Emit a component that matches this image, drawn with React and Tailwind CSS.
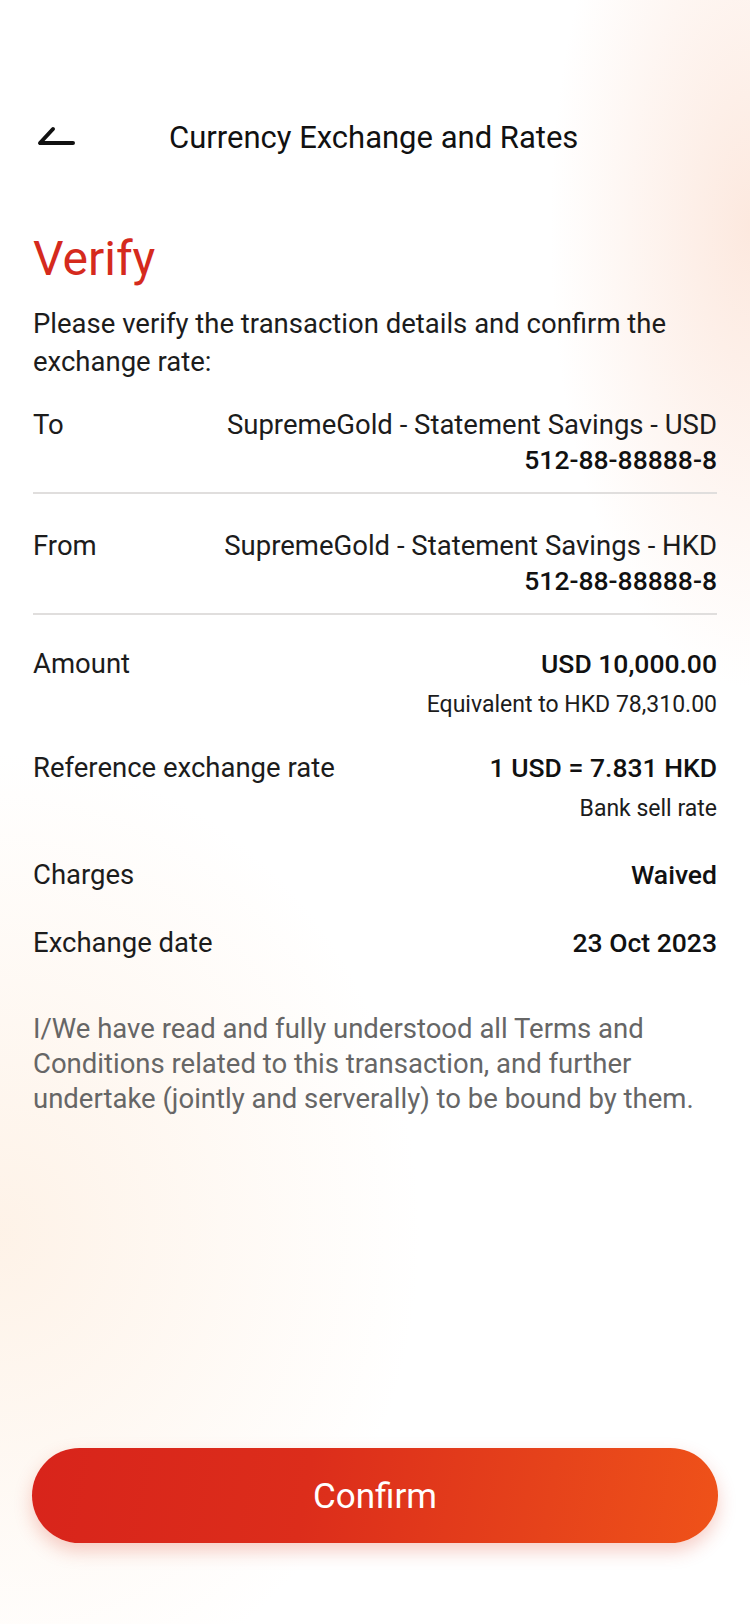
const font = { fontFamily: 'Roboto, "Noto Sans", sans-serif' }

function DetailRow({ label, value, sub }) {
  return (
    <div className="flex justify-between items-start">
      <div className="text-[27.5px] leading-[35px] text-[#1c1c1c]">{label}</div>
      <div className="flex flex-col items-end text-right">
        <div className="text-[27.5px] leading-[35px] text-[#1c1c1c]">{value}</div>
        <div className="text-[26.5px] leading-[35px] font-medium text-[#111]">{sub}</div>
      </div>
    </div>
  )
}

function ValueRow({ label, value, note }) {
  return (
    <div className="flex flex-col">
      <div className="flex justify-between items-start">
        <div className="text-[27.5px] leading-[35px] text-[#1c1c1c]">{label}</div>
        <div className="text-[26.5px] leading-[35px] font-medium text-[#111]">{value}</div>
      </div>
      {note && (
        <div className="mt-[9px] text-right text-[23px] leading-[30px] text-[#1c1c1c]">{note}</div>
      )}
    </div>
  )
}

export default function App() {
  return (
    <div
      style={font}
      className="relative w-[750px] h-[1624px] overflow-hidden flex flex-col bg-white bg-[radial-gradient(ellipse_200px_460px_at_100%_14%,rgba(250,214,196,0.55),transparent),radial-gradient(ellipse_420px_480px_at_0%_76%,rgba(253,234,216,0.6),transparent)]"
    >
      {/* header */}
      <div className="mt-[88px] h-[100px] flex items-center">
        <button className="w-[110px] h-full flex items-center pl-[36px]" aria-label="Back">
          <svg width="40" height="24" viewBox="0 0 40 24" fill="none">
            <path d="M17 3 L4 17 L37 17" stroke="#111" strokeWidth="4" strokeLinecap="round" strokeLinejoin="round" />
          </svg>
        </button>
        <div className="ml-[59px] text-[31px] leading-[36px] text-[#111]">Currency Exchange and Rates</div>
      </div>

      <div className="px-[33px] flex flex-col">
        <h1 className="mt-[42px] text-[48px] leading-[58px] text-[#d52a1d]">Verify</h1>
        <p className="mt-[17px] text-[27.5px] leading-[38px] text-[#1c1c1c]">
          Please verify the transaction details and confirm the exchange rate:
        </p>

        <div className="mt-[26px] pb-[15px] border-b-2 border-[#e0dedd]">
          <DetailRow label="To" value="SupremeGold - Statement Savings - USD" sub="512-88-88888-8" />
        </div>
        <div className="mt-[34px] pb-[15px] border-b-2 border-[#e0dedd]">
          <DetailRow label="From" value="SupremeGold - Statement Savings - HKD" sub="512-88-88888-8" />
        </div>

        <div className="mt-[31px]">
          <ValueRow label="Amount" value="USD 10,000.00" note="Equivalent to HKD 78,310.00" />
        </div>
        <div className="mt-[30px]">
          <ValueRow label="Reference exchange rate" value="1 USD = 7.831 HKD" note="Bank sell rate" />
        </div>
        <div className="mt-[33px]">
          <ValueRow label="Charges" value="Waived" />
        </div>
        <div className="mt-[33px]">
          <ValueRow label="Exchange date" value="23 Oct 2023" />
        </div>

        <p className="mt-[51px] text-[27.5px] leading-[35px] text-[#666]">
          I/We have read and fully understood all Terms and Conditions related to this transaction, and further undertake (jointly and serverally) to be bound by them.
        </p>
      </div>

      <div className="flex-1" />

      <div className="px-[32px] mb-[81px]">
        <button className="w-full h-[95px] pt-[4px] rounded-full bg-[linear-gradient(100deg,#d8241b_0%,#dc2d1b_40%,#e6431b_75%,#ef5219_100%)] shadow-[0_8px_18px_rgba(220,60,30,0.25)] text-white text-[35px]">
          Confirm
        </button>
      </div>
    </div>
  )
}
